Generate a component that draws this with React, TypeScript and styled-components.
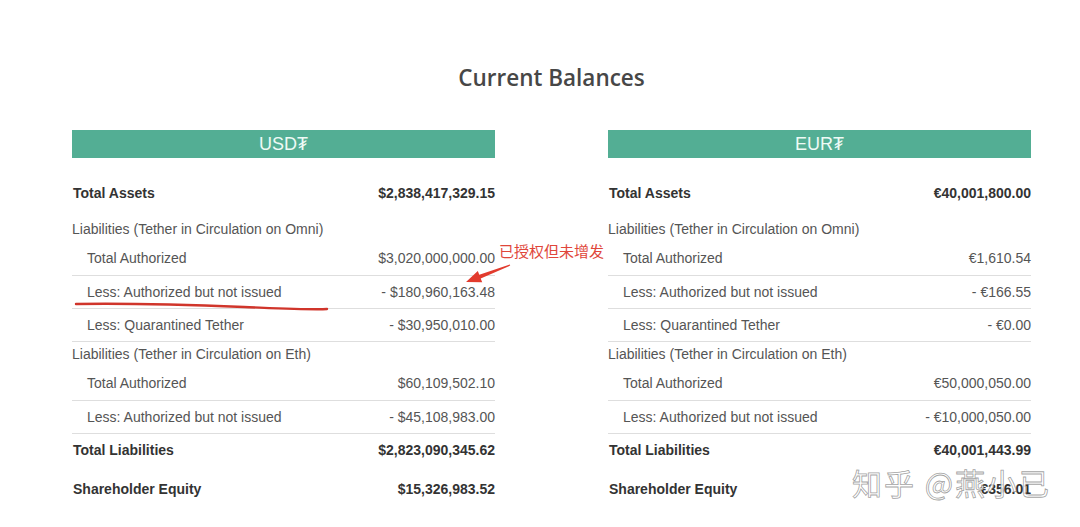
import React from "react";
import styled, { createGlobalStyle } from "styled-components";

type Kind = "total" | "heading" | "item";

interface Row {
  kind: Kind;
  label: string;
  divided?: boolean;
  pad: [number, number];
}

const rows: Row[] = [
  { kind: "total", label: "Total Assets", pad: [7, 7] },
  { kind: "heading", label: "Liabilities (Tether in Circulation on Omni)", pad: [9, 3] },
  { kind: "item", label: "Total Authorized", pad: [6, 7] },
  { kind: "item", label: "Less: Authorized but not issued", divided: true, pad: [6, 6] },
  { kind: "item", label: "Less: Quarantined Tether", divided: true, pad: [6, 6] },
  { kind: "heading", label: "Liabilities (Tether in Circulation on Eth)", divided: true, pad: [2, 3] },
  { kind: "item", label: "Total Authorized", pad: [6, 7] },
  { kind: "item", label: "Less: Authorized but not issued", divided: true, pad: [6, 6] },
  { kind: "total", label: "Total Liabilities", divided: true, pad: [6, 6] },
  { kind: "total", label: "Shareholder Equity", pad: [13, 7] },
];

const panels = [
  {
    title: "USD₮",
    values: [
      "$2,838,417,329.15",
      "",
      "$3,020,000,000.00",
      "- $180,960,163.48",
      "- $30,950,010.00",
      "",
      "$60,109,502.10",
      "- $45,108,983.00",
      "$2,823,090,345.62",
      "$15,326,983.52",
    ],
  },
  {
    title: "EUR₮",
    values: [
      "€40,001,800.00",
      "",
      "€1,610.54",
      "- €166.55",
      "- €0.00",
      "",
      "€50,000,050.00",
      "- €10,000,050.00",
      "€40,001,443.99",
      "€356.01",
    ],
  },
];

function App() {
  return (
    <>
      <GlobalStyle />
      <Page>
        <Title>Current Balances</Title>
        <Columns>
          {panels.map((p) => (
            <Panel key={p.title}>
              <PanelHeader>{p.title}</PanelHeader>
              <Table>
                {rows.map((r, i) => (
                  <TableRow key={i} $kind={r.kind} $divided={r.divided} $pt={r.pad[0]} $pb={r.pad[1]}>
                    <span>{r.label}</span>
                    <span>{p.values[i]}</span>
                  </TableRow>
                ))}
              </Table>
            </Panel>
          ))}
        </Columns>

        {/* hand-drawn annotations over the table */}
        <Underline viewBox="0 0 256 12" width="256" height="12">
          <path d="M2 3 C 60 2, 120 4, 170 6 S 240 9, 253 8" stroke="#d0352b" strokeWidth="2.4" fill="none" strokeLinecap="round" />
        </Underline>
        <Arrow viewBox="0 0 60 34" width="60" height="34">
          <polygon points="10,28 26.2,28.2 24.7,24.5 54.2,11.6 53.8,10.4 23.3,20.7 21.8,17" fill="#e23b2e" />
        </Arrow>
        <Note>已授权但未增发</Note>
        <Watermark>知乎 @燕小已</Watermark>
      </Page>
    </>
  );
}

export default App;

const GlobalStyle = createGlobalStyle`
  body {
    margin: 0;
    background: #fff;
  }
`;

const Page = styled.div`
  position: relative;
  width: 1080px;
  height: 527px;
  overflow: hidden;
  background: #fff;
`;

const Title = styled.h2`
  margin: 0 0 0 72px;
  padding-top: 62px;
  width: 959px;
  text-align: center;
  font-family: "Open Sans", sans-serif;
  font-weight: 600;
  font-size: 22.5px;
  line-height: 32px;
  color: #474747;
`;

const Columns = styled.div`
  display: flex;
  gap: 113px;
  margin-left: 72px;
  margin-top: 36px;
  width: 959px;
`;

const Panel = styled.div`
  width: 423px;
`;

const PanelHeader = styled.div`
  height: 28px;
  background: #53ae94;
  color: #eefaf5;
  font-family: "Liberation Sans", "DejaVu Sans", sans-serif;
  font-size: 18px;
  line-height: 28px;
  text-align: center;
`;

const Table = styled.div`
  display: flex;
  flex-direction: column;
  margin-top: 18px;
  font-family: "Liberation Sans", Arial, sans-serif;
`;

const TableRow = styled.div<{ $kind: Kind; $divided?: boolean; $pt: number; $pb: number }>`
  display: flex;
  justify-content: space-between;
  align-items: center;
  padding: ${(p) => p.$pt}px 0 ${(p) => p.$pb}px ${(p) => (p.$kind === "item" ? 15 : p.$kind === "total" ? 1 : 0)}px;
  border-top: ${(p) => (p.$divided ? "1px solid #dedede" : "none")};
  font-size: 14px;
  line-height: 20px;
  font-weight: ${(p) => (p.$kind === "total" ? 700 : 400)};
  color: ${(p) => (p.$kind === "total" ? "#333" : "#555")};
`;

const Underline = styled.svg`
  position: absolute;
  left: 74px;
  top: 301px;
`;

const Arrow = styled.svg`
  position: absolute;
  left: 456px;
  top: 254px;
`;

const Note = styled.div`
  position: absolute;
  left: 499px;
  top: 241px;
  font-family: "Noto Sans CJK SC", sans-serif;
  font-size: 15px;
  line-height: 20px;
  color: #e0463a;
`;

const Watermark = styled.div`
  position: absolute;
  left: 852px;
  top: 462px;
  font-family: "Noto Sans CJK SC", sans-serif;
  font-size: 30px;
  line-height: 40px;
  letter-spacing: 2px;
  color: rgba(255, 255, 255, 0.85);
  -webkit-text-stroke: 0.8px rgba(120, 120, 120, 0.7);
`;
